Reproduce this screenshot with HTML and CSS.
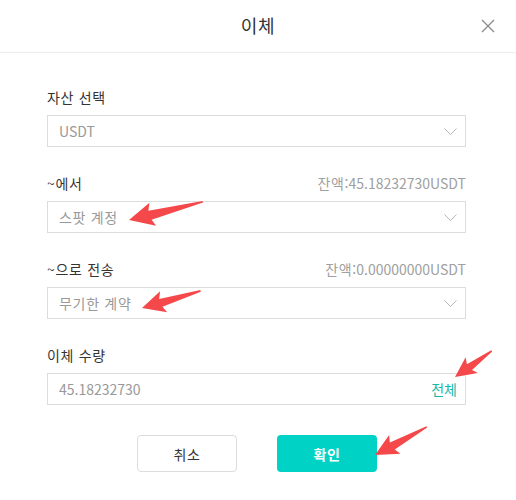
FILE: index.html
```html
<!DOCTYPE html>
<html lang="ko">
<head>
<meta charset="utf-8">
<link rel="stylesheet" href="styles.css">
</head>
<body>
<div class="dialog">
  <div class="header">
    <div class="title ko">이체</div>
    <svg class="close" width="14" height="14" viewBox="0 0 14 14"><path d="M1 1L13 13M13 1L1 13" stroke="#8a8a8a" stroke-width="1.3" fill="none"/></svg>
  </div>
  <div class="body">
    <div class="group">
      <div class="label-row"><span class="label ko">자산 선택</span></div>
      <div class="box"><span class="value">USDT</span><svg class="chev" width="13" height="8" viewBox="0 0 13 8"><path d="M0.5 0.5L6.5 6.5L12.5 0.5" stroke="#b8b8b8" stroke-width="1" fill="none"/></svg></div>
    </div>
    <div class="group">
      <div class="label-row"><span class="label ko">~에서</span><span class="balance"><span class="ko">잔액</span>:45.18232730USDT</span></div>
      <div class="box"><span class="value ko">스팟 계정</span><svg class="chev" width="13" height="8" viewBox="0 0 13 8"><path d="M0.5 0.5L6.5 6.5L12.5 0.5" stroke="#b8b8b8" stroke-width="1" fill="none"/></svg></div>
    </div>
    <div class="group">
      <div class="label-row"><span class="label ko">~으로 전송</span><span class="balance"><span class="ko">잔액</span>:0.00000000USDT</span></div>
      <div class="box"><span class="value ko">무기한 계약</span><svg class="chev" width="13" height="8" viewBox="0 0 13 8"><path d="M0.5 0.5L6.5 6.5L12.5 0.5" stroke="#b8b8b8" stroke-width="1" fill="none"/></svg></div>
    </div>
    <div class="group">
      <div class="label-row"><span class="label ko">이체 수량</span></div>
      <div class="box"><span class="value">45.18232730</span><span class="all ko">전체</span></div>
    </div>
    <div class="actions">
      <button class="btn cancel ko">취소</button>
      <button class="btn ok ko">확인</button>
    </div>
  </div>
  <svg class="arrows" width="516" height="500" viewBox="0 0 516 500">
    <g fill="#f5484a">
      <polygon transform="translate(129,220) rotate(-13.7)" points="0,0 24,-12 21,-4.5 76,-1 76,0.6 22,5 25,12"/>
      <polygon transform="translate(142,308) rotate(-16.1)" points="0,0 22,-11 19,-4 61,-1 61,0.6 20,4.5 23,11"/>
      <polygon transform="translate(455,377) rotate(-35.1)" points="0,0 20,-10 17,-3.5 45,-1 45,0.6 18,4 21,10"/>
      <polygon transform="translate(375,455) rotate(-28.3)" points="0,0 22,-11 19,-4 59,-1 59,0.6 20,4.5 23,11"/>
    </g>
  </svg>
</div>
</body>
</html>
```

FILE: styles.css
```css
* { box-sizing: border-box; }
html, body { margin: 0; padding: 0; background: #fff; }
body {
  font-family: "Noto Sans CJK KR", "Noto Sans", sans-serif;
  color: #333;
}
.ko { letter-spacing: 0.7px; }
.dialog {
  position: relative;
  width: 516px;
  height: 500px;
}
.header {
  position: relative;
  height: 53px;
  border-bottom: 1px solid #ececec;
  display: flex;
  align-items: center;
  justify-content: center;
}
.title {
  font-size: 18px;
  line-height: 24px;
  color: #333;
  margin-top: -2px;
}
.close {
  position: absolute;
  right: 21px;
  top: 19px;
}
.body {
  padding: 34px 50px 0 47px;
}
.group {
  margin-bottom: 26px;
}
.label-row {
  display: flex;
  justify-content: space-between;
  align-items: center;
  height: 20px;
  margin-bottom: 8px;
}
.label {
  font-size: 14px;
  color: #333;
}
.balance {
  font-size: 14px;
  color: #a0a0a0;
}
.box {
  height: 32px;
  border: 1px solid #dcdcdc;
  display: flex;
  align-items: center;
  justify-content: space-between;
  padding: 0 8px 0 11px;
}
.value {
  font-size: 14px;
  color: #999;
}
.chev {
  display: block;
  margin-top: 1px;
}
.all {
  font-size: 14px;
  color: #15b7a9;
  letter-spacing: 0;
}
.actions {
  display: flex;
  justify-content: center;
  gap: 40px;
  margin-top: 30px;
  padding-left: 1px;
}
.btn {
  width: 100px;
  height: 37px;
  border-radius: 4px;
  font-family: inherit;
  font-size: 14px;
  cursor: pointer;
}
.cancel {
  background: #fff;
  border: 1px solid #dcdcdc;
  color: #333;
}
.ok {
  background: #00d3c6;
  border: none;
  color: #fff;
  font-weight: 700;
}
.arrows {
  position: absolute;
  left: 0;
  top: 0;
  pointer-events: none;
}
```
